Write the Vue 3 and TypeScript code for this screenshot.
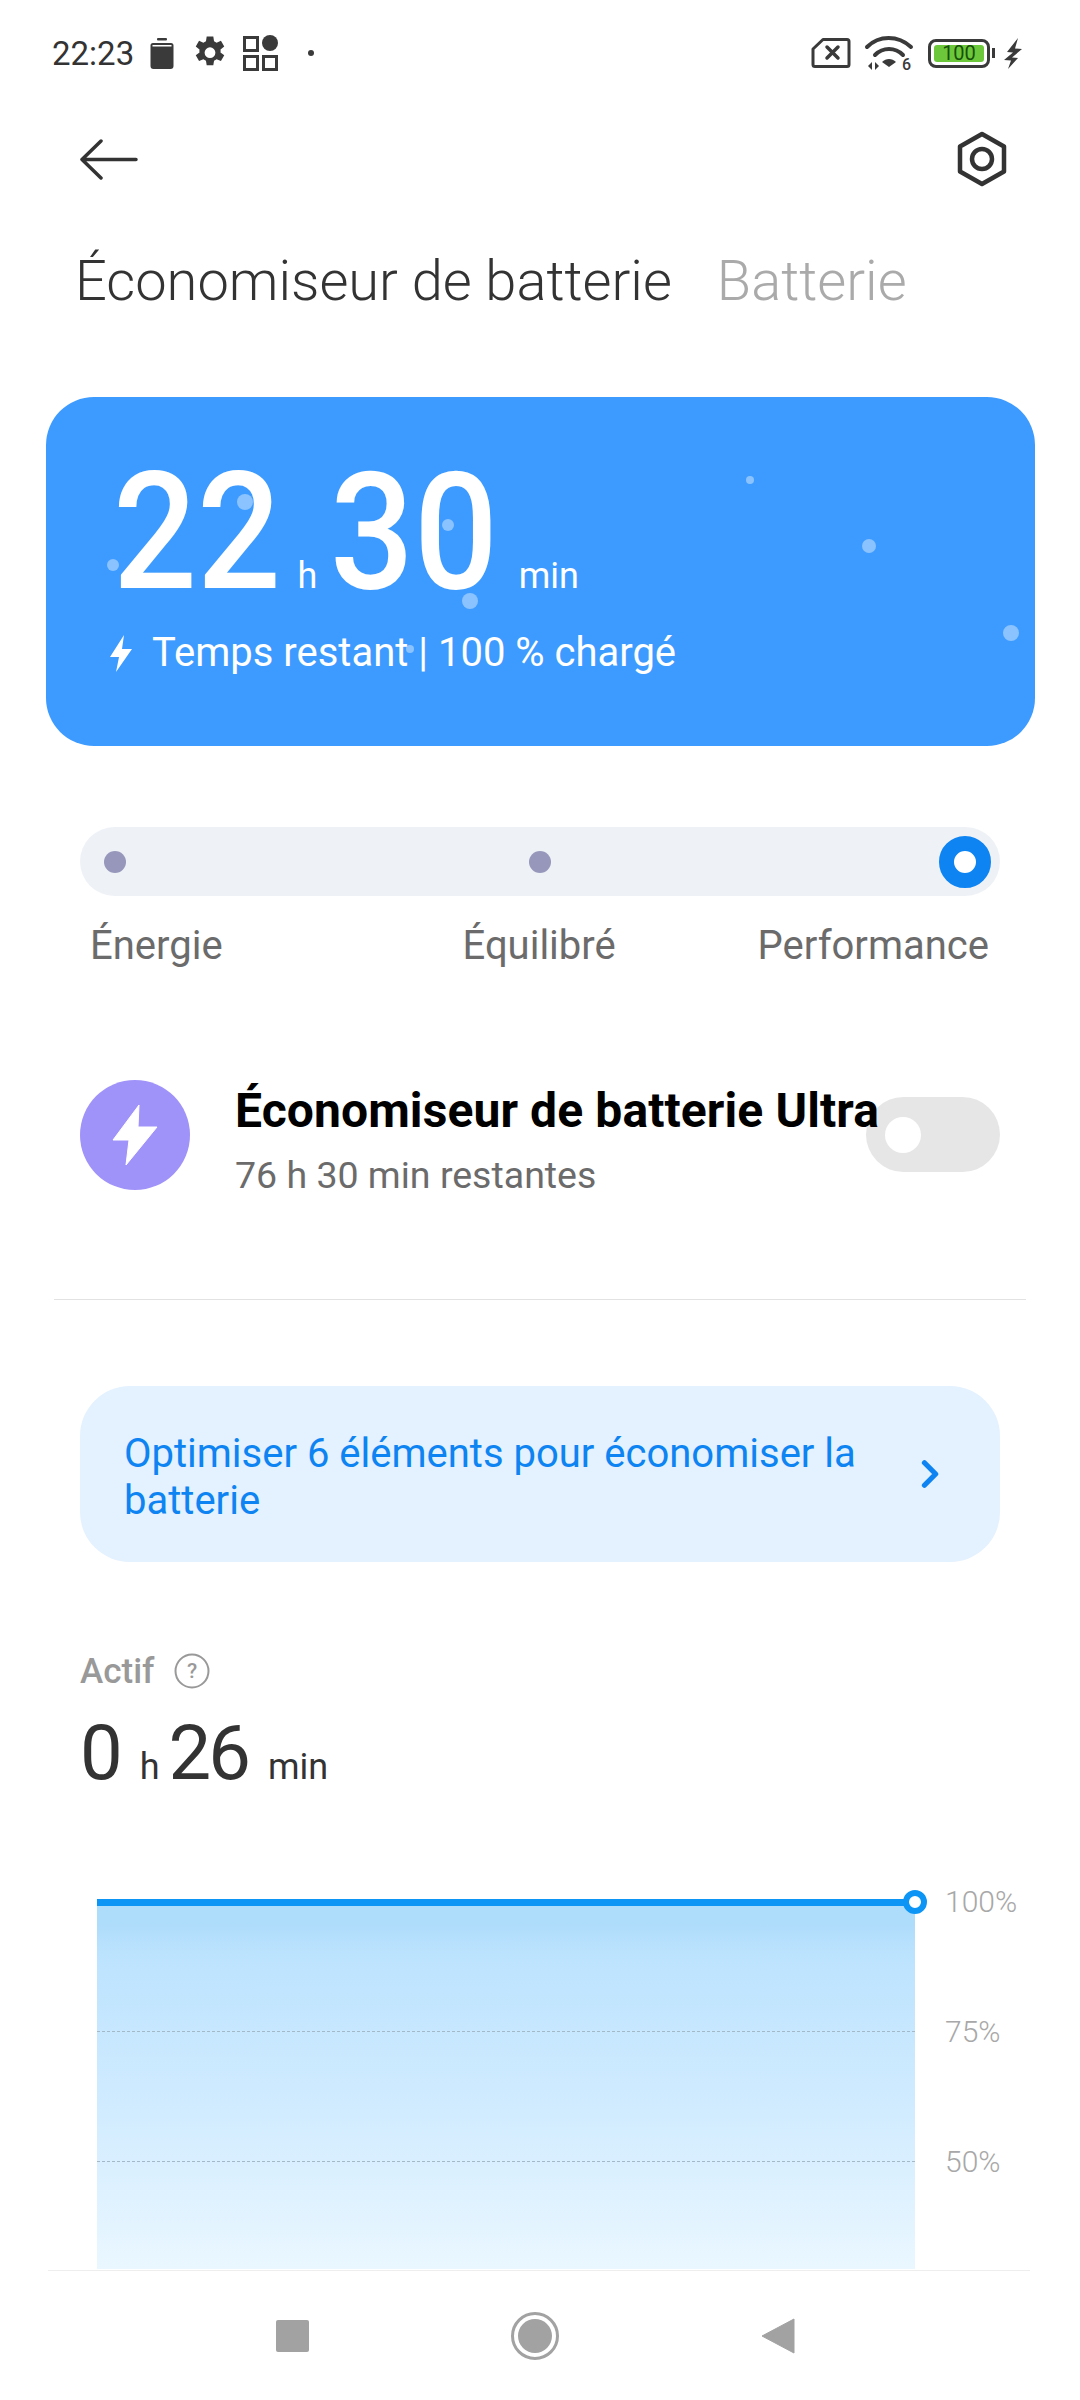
<template>
  <div class="page">
    <div class="status">
      <div class="status-left">
        <span class="clock">22:23</span>
        <svg class="ic-batt" width="24" height="31" viewBox="0 0 24 31">
          <rect x="7" y="0" width="10" height="2.500" rx="1" fill="#3a3a3a" />
          <path d="M3 5h18a2.500 2.500 0 0 1 2.500 2.500v20.500a3 3 0 0 1-3 3h-17a3 3 0 0 1-3-3V7.500A2.500 2.500 0 0 1 3 5z" fill="#3a3a3a" />
          <rect x="2.500" y="7" width="19" height="1.500" fill="#fff" />
        </svg>
        <svg class="ic-gear" width="36" height="36" viewBox="0 0 24 24">
          <path fill="#3a3a3a" fill-rule="evenodd" d="M14.200 1l.5 3.100c.6.300 1.200.6 1.700 1l2.900-1.200 2.200 3.800-2.500 1.900c.1.700.1 1.300 0 2l2.500 1.900-2.200 3.800-2.900-1.200c-.5.400-1.100.7-1.700 1l-.5 3.100H9.800l-.5-3.100c-.6-.3-1.200-.6-1.700-1l-2.900 1.200-2.200-3.800 2.500-1.900c-.1-.7-.1-1.300 0-2L2.500 7.700l2.200-3.800 2.900 1.200c.5-.4 1.100-.7 1.700-1L9.800 1h4.400zM12 8.200a3.600 3.600 0 1 0 0 7.200 3.600 3.600 0 0 0 0-7.200z" />
        </svg>
        <svg class="ic-apps" width="36" height="36" viewBox="0 0 36 36">
          <rect x="1.500" y="2.500" width="13" height="13" fill="none" stroke="#3a3a3a" stroke-width="3" />
          <rect x="1.500" y="21.500" width="13" height="13" fill="none" stroke="#3a3a3a" stroke-width="3" />
          <rect x="20.500" y="21.500" width="13" height="13" fill="none" stroke="#3a3a3a" stroke-width="3" />
          <circle cx="27" cy="8" r="8" fill="#3a3a3a" />
        </svg>
        <span class="status-dot"></span>
      </div>
      <div class="status-right">
        <svg class="ic-sim" width="40" height="32" viewBox="0 0 40 32">
          <path d="M12 2.500h24a2 2 0 0 1 2 2v23a2 2 0 0 1-2 2H4a2 2 0 0 1-2-2V12z" fill="none" stroke="#3a3a3a" stroke-width="3" stroke-linejoin="round" />
          <path d="M16 10l11 11M27 10L16 21" fill="none" stroke="#3a3a3a" stroke-width="3.500" stroke-linecap="round" />
        </svg>
        <svg class="ic-wifi" width="48" height="35" viewBox="0 0 48 35">
          <path d="M2 11C14 -1 33 -1 46 11" fill="none" stroke="#3a3a3a" stroke-width="4" stroke-linecap="round" />
          <path d="M10 19c8-8 20-8 28 0" fill="none" stroke="#3a3a3a" stroke-width="4" stroke-linecap="round" />
          <path d="M17 26c4-4 10-4 14 0l-7 5z" fill="#3a3a3a" />
          <path d="M7 26v8l-4-4zM10 34v-8l4 4z" fill="#3a3a3a" />
          <text x="37" y="34" class="wifi-six">6</text>
        </svg>
        <div class="batt">
          <div class="batt-fill"><span>100</span></div>
        </div>
        <span class="batt-nub"></span>
        <svg class="ic-bolt" width="18" height="31" viewBox="0 0 18 31">
          <path d="M14 0L3 14l6 .5L0 22l7 .5L4 31l10-11-6-.5L18 11l-7-.5z" fill="#3a3a3a" />
        </svg>
      </div>
    </div>

    <div class="content">
      <div class="topbar">
        <svg width="59" height="41" viewBox="0 0 59 41">
          <path d="M57 20.500H3M22 2L3 20.500 22 39" fill="none" stroke="#333" stroke-width="3.500" stroke-linecap="round" stroke-linejoin="round" />
        </svg>
        <svg width="52" height="56" viewBox="0 0 52 56">
          <path d="M26 3l22 12.500v25L26 53 4 40.500v-25z" fill="none" stroke="#333" stroke-width="4.500" stroke-linejoin="round" />
          <circle cx="26" cy="28" r="10" fill="none" stroke="#333" stroke-width="4.500" />
        </svg>
      </div>

      <div class="tabs">
        <span class="tab-on">Économiseur de batterie</span>
        <span class="tab-off">Batterie</span>
      </div>

      <div class="hero">
        <span v-for="(s, i) in snow" :key="i" class="flake" :style="flakeStyle(s)"></span>
        <div class="hero-time">
          <span class="big">22</span><span class="unit">h</span><span class="big second">30</span><span class="unit">min</span>
        </div>
        <div class="hero-sub">
          <svg width="24" height="37" viewBox="0 0 24 37">
            <path d="M15 0L1 22h9l-3 15 16-23H13z" fill="#fff" />
          </svg>
          <span>Temps restant | 100 % chargé</span>
        </div>
      </div>

      <div class="track">
        <span class="slot"><span class="stop"></span></span>
        <span class="slot"><span class="stop"></span></span>
        <span class="slot"><span class="stop-on"></span></span>
      </div>
      <div class="modes">
        <span>Énergie</span>
        <span class="mode-mid">Équilibré</span>
        <span>Performance</span>
      </div>

      <div class="ultra">
        <div class="ultra-icon">
          <svg width="46" height="60" viewBox="0 0 46 60">
            <path d="M27 0L1 35h16l-3 25 31-38H26z" fill="#fff" stroke="#fff" stroke-width="1" stroke-linejoin="round" />
          </svg>
        </div>
        <div class="ultra-text">
          <div class="ultra-title">Économiseur de batterie Ultra</div>
          <div class="ultra-sub">76 h 30 min restantes</div>
        </div>
        <div class="toggle"><span class="knob"></span></div>
      </div>

      <div class="divider"></div>

      <div class="tip">
        <div class="tip-text">Optimiser 6 éléments pour économiser la batterie</div>
        <svg width="22" height="34" viewBox="0 0 22 34">
          <path d="M4 4l13 13L4 30" fill="none" stroke="#0d84f2" stroke-width="6" stroke-linecap="round" stroke-linejoin="round" />
        </svg>
      </div>

      <div class="active-label">
        <span>Actif</span>
        <svg width="36" height="36" viewBox="0 0 36 36">
          <circle cx="18" cy="18" r="16.500" fill="none" stroke="#999" stroke-width="2" />
          <text x="18" y="25" text-anchor="middle" class="help">?</text>
        </svg>
      </div>
      <div class="active-time">
        <span class="mid">0</span><span class="mid-unit">h</span><span class="mid second-mid">26</span><span class="mid-unit">min</span>
      </div>

      <div class="chart">
        <div class="plot">
          <div class="plot-line"><span class="plot-dot"></span></div>
          <div class="plot-row"></div>
          <div class="plot-row"></div>
        </div>
        <div class="axis">
          <span v-for="l in axisLabels" :key="l">{{ l }}</span>
        </div>
      </div>
    </div>

    <div class="nav">
      <span class="nav-square"></span>
      <span class="nav-circle"><span></span></span>
      <svg width="34" height="36" viewBox="0 0 34 36">
        <path d="M33 1v34L1 18z" fill="#a2a2a2" stroke="#a2a2a2" stroke-width="1" stroke-linejoin="round" />
      </svg>
    </div>
  </div>
</template>

<script setup lang="ts">
interface Flake {
  x: number
  y: number
  r: number
}

// positions relative to the blue card
const snow: Flake[] = [
  { x: 199, y: 105, r: 8 },
  { x: 67, y: 168, r: 6 },
  { x: 402, y: 128, r: 6 },
  { x: 424, y: 204, r: 8 },
  { x: 704, y: 83, r: 4 },
  { x: 823, y: 149, r: 7 },
  { x: 965, y: 236, r: 8 },
  { x: 364, y: 252, r: 4 }
]

const axisLabels = ['100%', '75%', '50%']

const flakeStyle = (s: Flake) => ({
  left: `${s.x - s.r}px`,
  top: `${s.y - s.r}px`,
  width: `${s.r * 2}px`,
  height: `${s.r * 2}px`
})
</script>

<style>
html, body {
  margin: 0;
  background: #fff;
}
</style>

<style scoped>
.page {
  width: 1080px;
  height: 2400px;
  display: flex;
  flex-direction: column;
  overflow: hidden;
  background: #fff;
  font-family: Roboto, "Noto Sans", sans-serif;
  color: #333;
}
.status {
  height: 106px;
  flex: none;
  display: flex;
  justify-content: space-between;
  align-items: center;
  padding: 0 58px 0 52px;
  box-sizing: border-box;
}
.status-left,
.status-right {
  display: flex;
  align-items: center;
}
.clock {
  font-size: 33px;
  color: #333;
  margin-right: 16px;
}
.ic-gear {
  margin-left: 18px;
}
.ic-apps {
  margin-left: 15px;
}
.status-dot {
  width: 6px;
  height: 6px;
  border-radius: 50%;
  background: #3a3a3a;
  margin-left: 29px;
}
.ic-wifi {
  margin-left: 14px;
  overflow: visible;
}
.wifi-six {
  font-size: 16px;
  font-weight: 500;
  fill: #3a3a3a;
}
.batt {
  width: 62px;
  height: 29px;
  margin-left: 15px;
  border: 3.5px solid #3a3a3a;
  border-radius: 8px;
  box-sizing: border-box;
  padding: 3px;
  display: flex;
}
.batt-fill {
  flex: 1;
  background: #6cc83a;
  border-radius: 3px;
  display: flex;
  align-items: center;
  justify-content: center;
  font-size: 20px;
  line-height: 1;
  color: #17500b;
}
.batt-nub {
  width: 3px;
  height: 10px;
  margin-left: 2px;
  background: #3a3a3a;
}
.ic-bolt {
  margin-left: 9px;
}
.content {
  flex: 1;
  min-height: 0;
  overflow: hidden;
  display: flex;
  flex-direction: column;
}
.topbar {
  display: flex;
  justify-content: space-between;
  align-items: center;
  padding: 25px 72px 0 79px;
  height: 56px;
  flex: none;
}
.tabs {
  display: flex;
  align-items: baseline;
  gap: 45px;
  padding: 63px 0 0 75px;
  font-size: 56px;
  line-height: 62px;
  font-weight: 300;
  flex: none;
}
.tab-on {
  color: #333;
}
.tab-off {
  color: #aaa;
}
.hero {
  position: relative;
  flex: none;
  margin: 85px 45px 0 46px;
  height: 349px;
  box-sizing: border-box;
  padding: 60px 0 0 67px;
  background: #3d9bff;
  border-radius: 48px;
  color: #fff;
  overflow: hidden;
}
.flake {
  position: absolute;
  border-radius: 50%;
  background: rgba(255, 255, 255, 0.4);
}
.hero-time {
  display: flex;
  align-items: baseline;
  height: 150px;
  line-height: 150px;
}
/* digits are narrower than Roboto's, squeeze them */
.big {
  display: inline-block;
  font-size: 164px;
  font-weight: 500;
  transform: scaleX(0.9);
  transform-origin: left center;
  margin-right: -24px;
}
.second {
  margin-left: 13px;
}
.unit {
  font-size: 36px;
  margin-left: 22px;
}
.second + .unit {
  margin-left: 26px;
}
.hero-sub {
  display: flex;
  align-items: center;
  gap: 19px;
  margin-top: 23px;
  margin-left: -4px;
  font-size: 40px;
  line-height: 46px;
}
.track {
  flex: none;
  margin: 81px 80px 0;
  height: 69px;
  border-radius: 35px;
  background: #eef1f6;
  display: flex;
  align-items: center;
  justify-content: space-between;
}
.slot {
  width: 70px;
  display: flex;
  justify-content: center;
}
.stop {
  width: 22px;
  height: 22px;
  border-radius: 50%;
  background: #9797bb;
}
.stop-on {
  width: 52px;
  height: 52px;
  border-radius: 50%;
  box-sizing: border-box;
  border: 15px solid #0d84f2;
  background: #fff;
}
.modes {
  flex: none;
  display: flex;
  justify-content: space-between;
  margin: 28px 91px 0 90px;
  font-size: 40px;
  line-height: 44px;
  color: #6b6b6b;
}
.mode-mid {
  margin-left: 98px;
}
.ultra {
  flex: none;
  display: flex;
  align-items: center;
  margin: 112px 80px 0;
  height: 110px;
  position: relative;
}
.ultra-icon {
  width: 110px;
  height: 110px;
  border-radius: 50%;
  background: #9f92f9;
  display: flex;
  align-items: center;
  justify-content: center;
  flex: none;
}
.ultra-text {
  margin-left: 45px;
  white-space: nowrap;
  flex: 1;
  min-width: 0;
  padding-top: 12px;
  position: relative;
  z-index: 1;
}
.ultra-title {
  font-size: 48px;
  font-weight: 700;
  line-height: 48px;
  color: #000;
  letter-spacing: 0.1px;
}
.ultra-sub {
  font-size: 37.5px;
  line-height: 42px;
  margin-top: 19px;
  color: #6b6b6b;
}
.toggle {
  position: absolute;
  right: 0;
  top: 17px;
  width: 134px;
  height: 75px;
  border-radius: 38px;
  background: #e6e6e6;
  display: flex;
  align-items: center;
  padding-left: 19px;
  box-sizing: border-box;
}
.knob {
  width: 36px;
  height: 36px;
  border-radius: 50%;
  background: #fff;
}
.divider {
  flex: none;
  height: 1px;
  margin: 109px 54px 0;
  background: #e2e2e2;
}
.tip {
  flex: none;
  margin: 86px 80px 0;
  height: 176px;
  box-sizing: border-box;
  padding: 0 60px 0 44px;
  background: #e4f1fe;
  border-radius: 50px;
  display: flex;
  align-items: center;
  justify-content: space-between;
  gap: 40px;
}
.tip-text {
  font-size: 40px;
  line-height: 47px;
  color: #0d84f2;
  padding-top: 6px;
}
.active-label {
  flex: none;
  display: flex;
  align-items: center;
  gap: 20px;
  margin: 87px 0 0 80px;
  height: 44px;
  font-size: 35px;
  font-weight: 500;
  color: #999;
}
.help {
  font-size: 21px;
  fill: #999;
}
.active-time {
  flex: none;
  display: flex;
  align-items: baseline;
  margin: 20px 0 0 80px;
  height: 80px;
  line-height: 80px;
  color: #333;
}
.mid {
  font-size: 76px;
  letter-spacing: -3px;
}
.second-mid {
  margin-left: 9px;
}
.mid-unit {
  font-size: 36px;
  margin-left: 20px;
}
.chart {
  flex: none;
  display: flex;
  margin: 109px 0 0 97px;
}
.plot {
  width: 818px;
  height: 367px;
  position: relative;
  background: linear-gradient(180deg, #aedcfb 0, #aedcfb 6%, #bce3fe 14%, #d0ebff 55%, #eaf7ff 100%);
  display: flex;
  flex-direction: column;
}
.plot-line {
  position: absolute;
  left: 0;
  right: 0;
  top: -3px;
  height: 7px;
  background: #0d95f5;
}
.plot-dot {
  position: absolute;
  right: -12px;
  top: -9px;
  width: 24px;
  height: 24px;
  box-sizing: border-box;
  border-radius: 50%;
  border: 6px solid #0d95f5;
  background: #fff;
}
.plot-row {
  flex: none;
  height: 130px;
  box-sizing: border-box;
  border-bottom: 1px dashed #a3b9c8;
}
.axis {
  display: flex;
  flex-direction: column;
  margin-left: 30px;
  margin-top: -20px;
  font-size: 30px;
  line-height: 40px;
  font-weight: 300;
  color: #a8a8a8;
  gap: 90px;
}
.nav {
  flex: none;
  height: 130px;
  margin: 0 50px 0 48px;
  border-top: 1px solid #eeeeee;
  box-sizing: border-box;
  display: flex;
  align-items: center;
  padding: 0 235px 0 228px;
  justify-content: space-between;
}
.nav-square {
  width: 33px;
  height: 32px;
  background: #a2a2a2;
  border-radius: 2px;
}
.nav-circle {
  width: 48px;
  height: 48px;
  box-sizing: border-box;
  border: 3px solid #a2a2a2;
  border-radius: 50%;
  padding: 4px;
  display: flex;
}
.nav-circle span {
  flex: 1;
  border-radius: 50%;
  background: #a2a2a2;
}
</style>
